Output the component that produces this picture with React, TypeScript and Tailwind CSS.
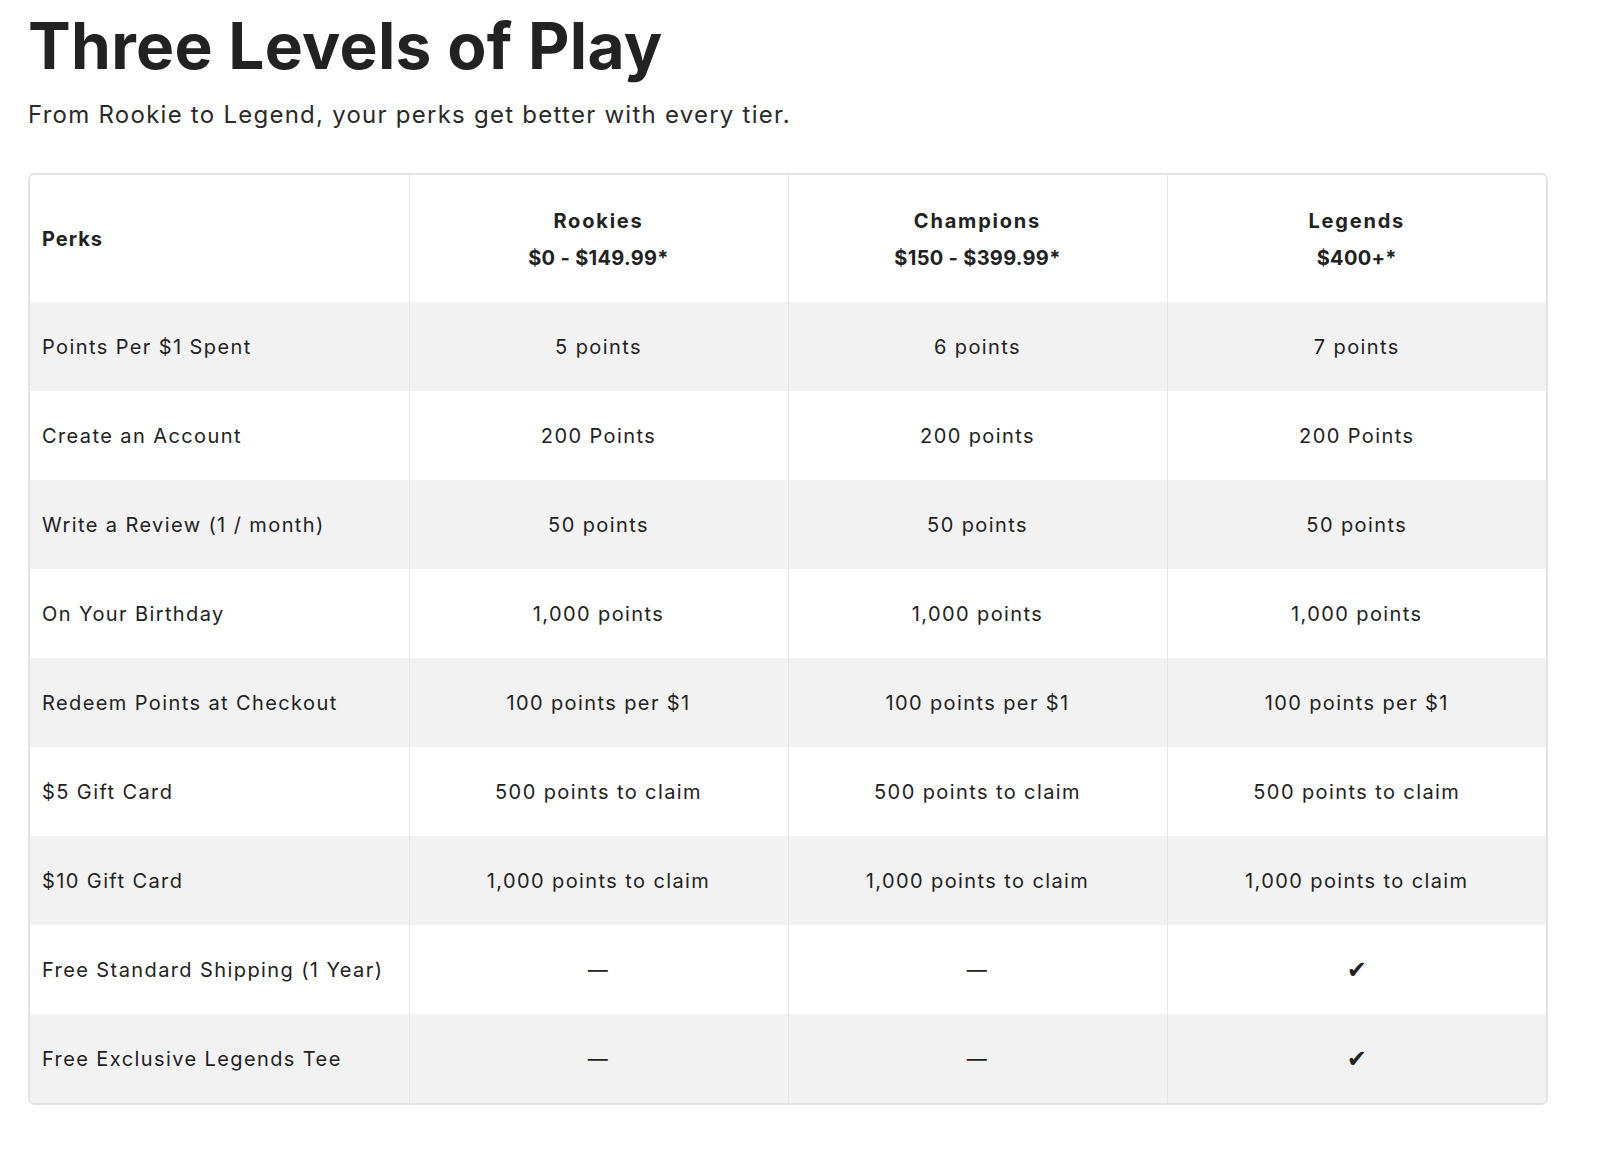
const tiers = [
  { name: "Rookies", range: "$0 - $149.99*" },
  { name: "Champions", range: "$150 - $399.99*" },
  { name: "Legends", range: "$400+*" },
];

const rows: [string, string, string, string][] = [
  ["Points Per $1 Spent", "5 points", "6 points", "7 points"],
  ["Create an Account", "200 Points", "200 points", "200 Points"],
  ["Write a Review (1 / month)", "50 points", "50 points", "50 points"],
  ["On Your Birthday", "1,000 points", "1,000 points", "1,000 points"],
  ["Redeem Points at Checkout", "100 points per $1", "100 points per $1", "100 points per $1"],
  ["$5 Gift Card", "500 points to claim", "500 points to claim", "500 points to claim"],
  ["$10 Gift Card", "1,000 points to claim", "1,000 points to claim", "1,000 points to claim"],
  ["Free Standard Shipping (1 Year)", "—", "—", "✔"],
  ["Free Exclusive Legends Tee", "—", "—", "✔"],
];

export default function App() {
  return (
    <div className="min-h-screen bg-white text-[#222] font-['Inter',sans-serif] pl-[28px] pr-[52px] pt-[11px]">
      <h1 className="text-[64px] leading-[70px] font-bold tracking-[0.3px]">Three Levels of Play</h1>
      <p className="mt-[18px] text-[24px] leading-[32px] tracking-[1.25px] text-[#2a2a2a]">
        From Rookie to Legend, your perks get better with every tier.
      </p>

      <div className="mt-[42px] border-2 border-[#e3e3e3] rounded-[7px] overflow-hidden">
        <table className="w-full table-fixed border-collapse text-[20px] tracking-[1.4px]">
          <thead>
            <tr className="h-[127px] bg-white">
              <th className="text-left font-bold px-[12px] tracking-[1px]">Perks</th>
              {tiers.map((t) => (
                <th key={t.name} className="border-l border-[#e6e6e6] font-bold text-center leading-[37px] pt-[2px] tracking-[1px]">
                  <div className="tracking-[1.8px]">{t.name}</div>
                  <div className="tracking-[0.3px]">{t.range}</div>
                </th>
              ))}
            </tr>
          </thead>
          <tbody>
            {rows.map((r, i) => (
              <tr key={r[0]} className={i % 2 === 0 ? "h-[89px] bg-[#f2f2f2]" : "h-[89px] bg-white"}>
                <td className="px-[12px]">{r[0]}</td>
                {r.slice(1).map((c, j) => (
                  <td key={j} className={c === "✔" ? "border-l border-[#e6e6e6] text-center text-[24px] tracking-normal font-['DejaVu_Sans',sans-serif]" : "border-l border-[#e6e6e6] text-center"}>
                    {c}
                  </td>
                ))}
              </tr>
            ))}
          </tbody>
        </table>
      </div>
    </div>
  );
}
